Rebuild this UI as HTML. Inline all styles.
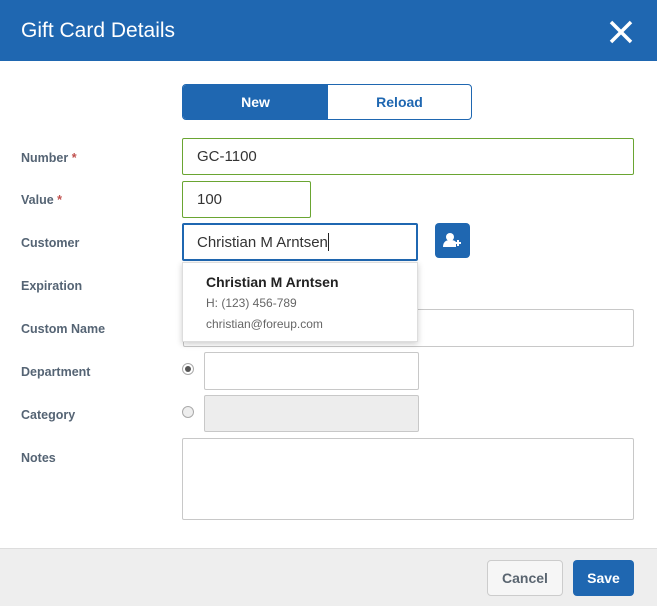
<!DOCTYPE html><html><head><style>
*{box-sizing:border-box}body{margin:0;width:657px;height:606px;font-family:"Liberation Sans",sans-serif;background:#fff;position:relative;overflow:hidden}
.a{position:absolute}
.hd{left:0;top:0;width:657px;height:61px;background:#1f67b1;color:#fff;font-size:21px;padding:19px 0 0 21px}
.lb{left:21px;font-size:12.5px;font-weight:bold;color:#556474}
.lb span{color:#c0504d}
.in{border:1px solid #c8c8c8;border-radius:2px;background:#fff;font-size:15px;color:#333;padding-left:14px;display:flex;align-items:center}
.g{border-color:#6aa532}
.rd{width:12px;height:12px;border-radius:50%;border:1px solid #aaa;background:#eee}
</style></head><body>
<div class="a hd">Gift Card Details</div>
<svg class="a" style="left:609px;top:20px" width="24" height="24"><path d="M2 2L22 22M22 2L2 22" stroke="#fff" stroke-width="3.5"/></svg>
<div class="a" style="left:182px;top:84px;width:290px;height:36px;border:1px solid #1f67b1;border-radius:4px;display:flex;overflow:hidden;font-size:14px;font-weight:bold">
<div style="width:145px;background:#1f67b1;color:#fff;display:flex;align-items:center;justify-content:center">New</div>
<div style="flex:1;color:#1f67b1;display:flex;align-items:center;justify-content:center">Reload</div></div>
<div class="a lb" style="top:151px">Number <span>*</span></div>
<div class="a lb" style="top:193px">Value <span>*</span></div>
<div class="a lb" style="top:236px">Customer</div>
<div class="a lb" style="top:279px">Expiration</div>
<div class="a lb" style="top:322px">Custom Name</div>
<div class="a lb" style="top:365px">Department</div>
<div class="a lb" style="top:408px">Category</div>
<div class="a lb" style="top:451px">Notes</div>
<div class="a in g" style="left:182px;top:138px;width:452px;height:37px">GC-1100</div>
<div class="a in g" style="left:182px;top:181px;width:129px;height:37px">100</div>
<div class="a in" style="left:182px;top:223px;width:236px;height:38px;border:2px solid #1f67b1;padding-left:13px">Christian M Arntsen<span style="display:inline-block;width:1px;height:18px;background:#222"></span></div>
<div class="a" style="left:435px;top:223px;width:35px;height:35px;background:#1f67b1;border-radius:4px"><svg width="35" height="35"><circle cx="15" cy="14" r="4" fill="#fff"/><path d="M8 24c0-5 3-7 7-7s5 1 6 2v5z" fill="#fff"/><path d="M20 20h6M23 17v6" stroke="#fff" stroke-width="2"/></svg></div>
<div class="a in" style="left:183px;top:309px;width:451px;height:38px"></div>
<div class="a" style="left:182px;top:262px;width:236px;height:80px;background:#fff;border:1px solid #ddd;box-shadow:0 2px 6px rgba(0,0,0,.2);padding:11px 0 0 23px">
<div style="font-size:14px;font-weight:bold;color:#222">Christian M Arntsen</div>
<div style="font-size:12px;color:#666;margin-top:6px">H: (123) 456-789</div>
<div style="font-size:12px;color:#666;margin-top:7px">christian@foreup.com</div></div>
<div class="a rd" style="left:182px;top:363px;background:#fff;display:flex;align-items:center;justify-content:center"><div style="width:6px;height:6px;border-radius:50%;background:#555"></div></div>
<div class="a in" style="left:204px;top:352px;width:215px;height:38px"></div>
<div class="a rd" style="left:182px;top:406px"></div>
<div class="a in" style="left:204px;top:395px;width:215px;height:37px;background:#ededed"></div>
<div class="a in" style="left:182px;top:438px;width:452px;height:82px"></div>
<div class="a" style="left:0;top:548px;width:657px;height:58px;background:#eee;border-top:1px solid #ddd"></div>
<div class="a" style="left:487px;top:560px;width:76px;height:36px;border:1px solid #ccc;border-radius:4px;background:#f6f6f6;color:#5a6570;font-size:14px;font-weight:bold;display:flex;align-items:center;justify-content:center">Cancel</div>
<div class="a" style="left:573px;top:560px;width:61px;height:36px;border-radius:4px;background:#1f67b1;color:#fff;font-size:14px;font-weight:bold;display:flex;align-items:center;justify-content:center">Save</div>
</body></html>
